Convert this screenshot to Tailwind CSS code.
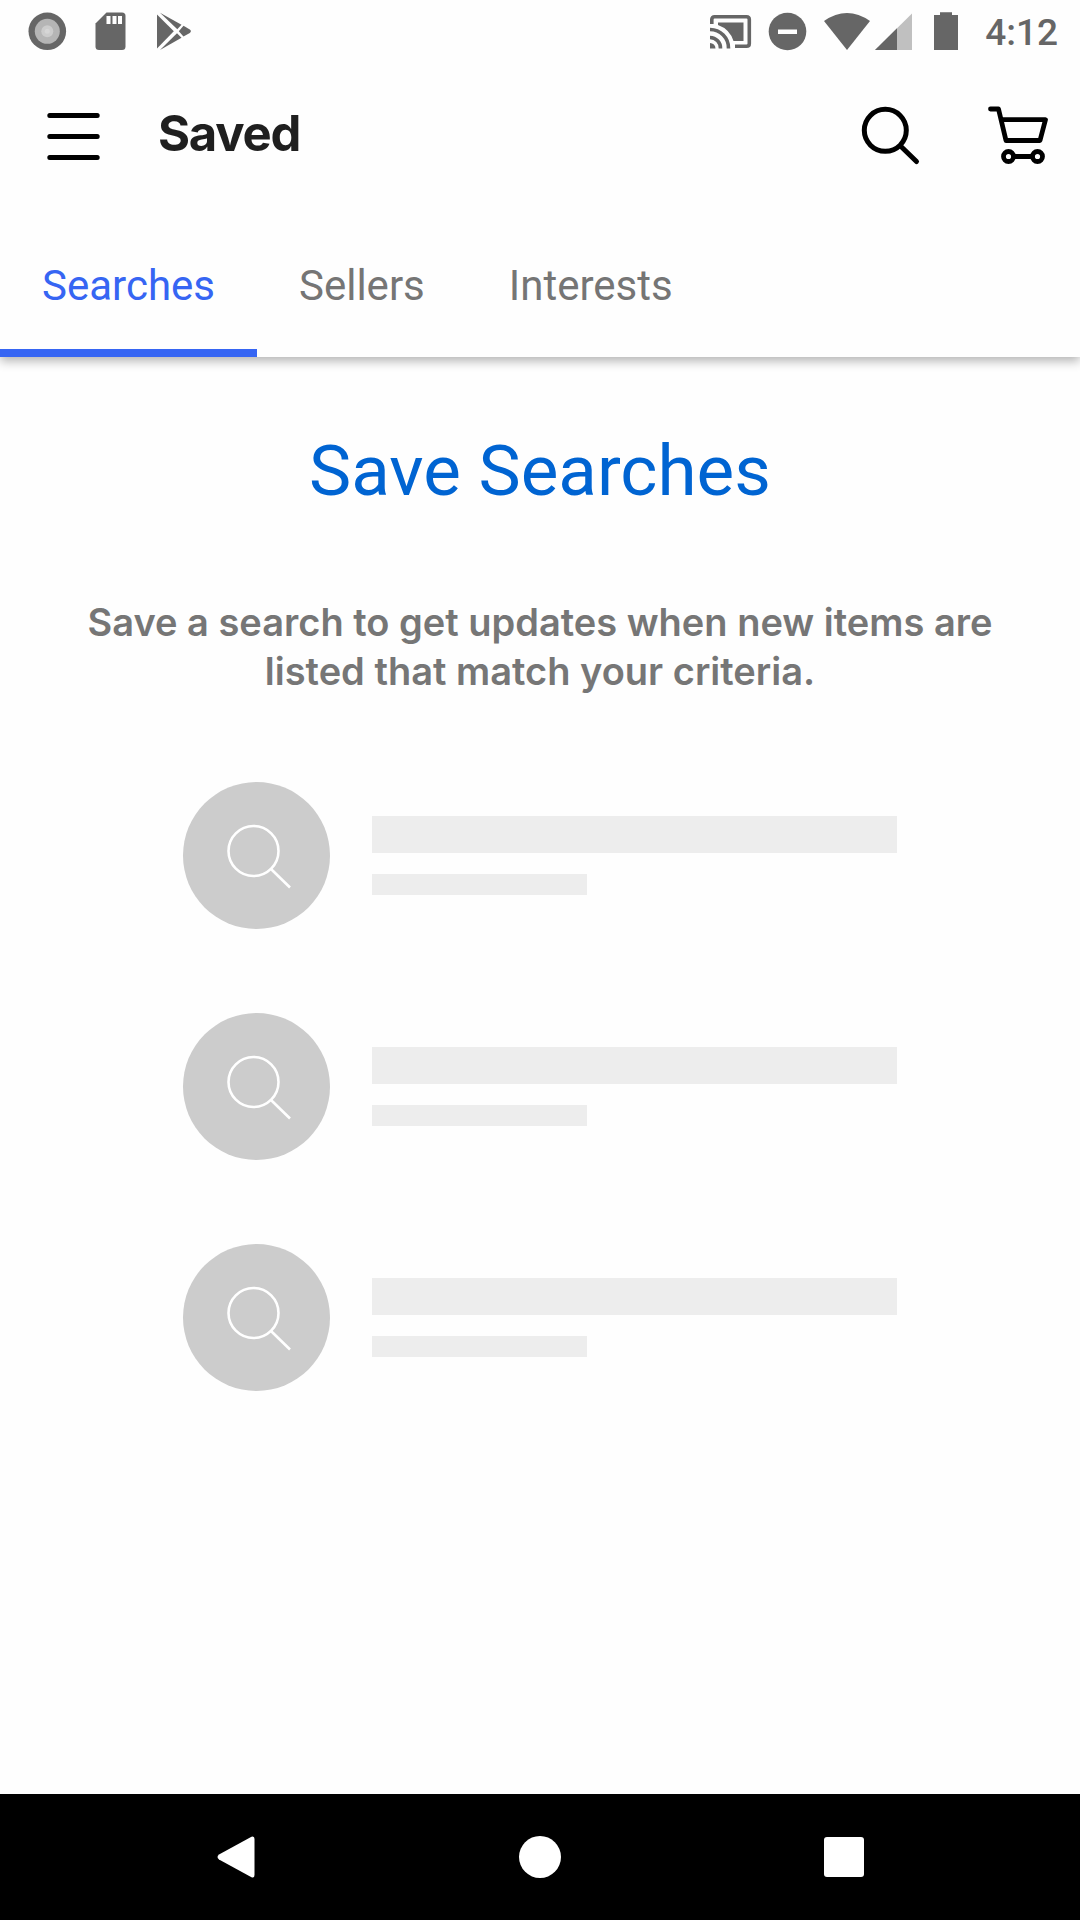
<!DOCTYPE html>
<html lang="en">
<head>
<meta charset="utf-8">
<meta name="viewport" content="width=device-width, initial-scale=1">
<title>Saved</title>
<script src="https://cdn.jsdelivr.net/npm/@tailwindcss/browser@4"></script>
</head>
<body class="flex min-h-screen flex-col bg-[#fefefe] font-['Roboto',sans-serif]">

<svg class="hidden" aria-hidden="true">
  <symbol id="lens" viewBox="0 0 147 147">
    <g fill="none" stroke="#fff" stroke-width="2.6"><circle cx="70.500" cy="69" r="25"/><path d="M88 87l19 18.500"/></g>
  </symbol>
</svg>

<!-- System status bar -->
<div class="relative z-10 flex h-[63px] items-start justify-between bg-[#fefefe] pt-[10px] pr-[22px] pl-[26px] text-[#666]">
  <div class="flex gap-[21px]">
    <svg class="size-[42px]" viewBox="0 0 42 42"><circle cx="21.300" cy="21.300" r="18.800" fill="#666"/><circle cx="21.300" cy="21.300" r="12.500" fill="#b5b5b5"/><circle cx="21.300" cy="21.300" r="6" fill="#ccc"/><circle cx="21.300" cy="21.300" r="2.500" fill="#d6d6d6"/></svg>
    <svg class="size-[42px]" viewBox="0 0 42 42"><path fill="currentColor" d="M17.500 2.500H33a3.500 3.500 0 0 1 3.500 3.500v30.500a3.500 3.500 0 0 1-3.500 3.500H10a3.500 3.500 0 0 1-3.500-3.500V13.500z"/><path fill="#fff" d="M17.500 6h4v8h-4zM23.500 6h4v8h-4zM29 6h4v8h-4z"/></svg>
    <svg class="size-[42px]" viewBox="0 0 42 42"><g fill="currentColor"><path d="M5 4.500L21.800 21.300L5 38.500z"/><path d="M8 2.800L29.500 14.700L25.300 19.200z"/><path d="M8 40L29.500 27.700L25 23.200z"/><path d="M31.500 15.800L37.800 19.500Q40 21.200 37.800 23L31.500 26.500L26.800 21.300z"/></g></svg>
  </div>
  <div class="flex gap-[15px]">
    <svg class="h-[42px] w-[44px]" viewBox="0 0 44 42"><g fill="none" stroke="currentColor" stroke-width="3.600"><path d="M2.800 14V9.500Q2.800 6.700 5.600 6.700H37.500Q40.300 6.700 40.300 9.500V33.500Q40.300 36.300 37.500 36.300H26"/><path d="M1 27.500A10.500 10.500 0 0 1 11.500 38.500M1 19.500A18.500 18.500 0 0 1 19.500 38.500"/></g><path fill="currentColor" d="M1 33a5.500 5.500 0 0 1 5.500 5.500H1zM9 12.500H34.500V31H24.500A25 25 0 0 0 9 15z"/></svg>
    <svg class="h-[42px] w-10" viewBox="0 0 40 42"><circle cx="19.500" cy="21.500" r="18.800" fill="currentColor"/><path fill="#fff" d="M10 19.500h19v4.500H10z"/></svg>
    <div class="flex gap-1">
      <svg class="h-[42px] w-12" viewBox="0 0 48 42"><path fill="currentColor" d="M1 11Q24 -5 47 11L24 40z"/></svg>
      <svg class="h-[42px] w-[38px]" viewBox="0 0 38 42"><path fill="#c0c0c0" d="M37 3.500V40H0z"/><path fill="currentColor" d="M22 18.300V40H0z"/></svg>
    </div>
    <svg class="h-[42px] w-9" viewBox="0 0 36 42"><path fill="currentColor" d="M6 5h6V2.200h12V5h6v35H6z"/></svg>
    <time class="pl-[6px] text-[37px] leading-[46px] font-medium">4:12</time>
  </div>
</div>

<!-- App bar and tabs -->
<header class="relative bg-[#fefefe] shadow-[0_4px_10px_rgba(0,0,0,0.3)]">
  <div class="flex h-[147px] items-center pr-[30px] pl-[42px]">
    <button type="button" aria-label="Menu">
      <svg class="size-[63px]" viewBox="0 0 63 63"><path fill="none" stroke="#000" stroke-width="5" stroke-linecap="round" d="M7.800 10.500H55.200M7.800 31.500H55.200M7.800 52.500H55.200"/></svg>
    </button>
    <h1 class="grow pb-[6px] pl-[53px] font-['Inter',sans-serif] text-[49px] leading-[60px] font-bold tracking-tight text-[#1f1f1f]">Saved</h1>
    <div class="flex gap-[65px]">
      <button type="button" aria-label="Search">
        <svg class="size-[63px]" viewBox="0 0 63 63"><g fill="none" stroke="#000" stroke-width="5" stroke-linecap="round"><circle cx="26.300" cy="25.300" r="21"/><path d="M42 41.500L57.500 56.500"/></g></svg>
      </button>
      <button type="button" aria-label="Cart">
        <svg class="size-[63px]" viewBox="0 0 63 63"><g fill="none" stroke="#000" stroke-width="4.800" stroke-linecap="round" stroke-linejoin="round"><path d="M3.500 4H11.500L19 35.500H53L58.500 14.700H14.500"/><circle cx="21.500" cy="51.500" r="5"/><circle cx="50.500" cy="51.500" r="5"/><path d="M27 51.500H45"/></g></svg>
      </button>
    </div>
  </div>
  <div role="tablist" class="flex h-[147px] text-[42px] leading-[50px] text-[#757575]">
    <button type="button" role="tab" aria-selected="true" class="border-b-8 border-[#3665f3] px-[42px] pt-[13px] text-[#3665f3]">Searches</button>
    <button type="button" role="tab" aria-selected="false" class="border-b-8 border-transparent px-[42px] pt-[13px]">Sellers</button>
    <button type="button" role="tab" aria-selected="false" class="border-b-8 border-transparent px-[42px] pt-[13px]">Interests</button>
  </div>
</header>

<!-- Empty state -->
<main class="flex grow flex-col items-center px-[42px] pt-[72px] text-center">
  <h2 class="text-[71px] leading-[84px] text-[#0064d2]">Save Searches</h2>
  <p class="mt-[85px] max-w-[940px] font-['Inter',sans-serif] text-[38px] leading-[49px] font-semibold text-[#767676]">Save a search to get updates when new items are listed that match your criteria.</p>
  <ul class="mt-[86px] flex w-full max-w-[714px] flex-col gap-[84px]">
    <li class="flex items-center gap-[42px]">
      <svg class="size-[147px] shrink-0 rounded-full bg-[#ccc]" aria-hidden="true"><use href="#lens"/></svg>
      <div class="flex grow flex-col gap-[21px]"><div class="h-[37px] bg-[#ededed]"></div><div class="h-[21px] w-[41%] bg-[#ededed]"></div></div>
    </li>
    <li class="flex items-center gap-[42px]">
      <svg class="size-[147px] shrink-0 rounded-full bg-[#ccc]" aria-hidden="true"><use href="#lens"/></svg>
      <div class="flex grow flex-col gap-[21px]"><div class="h-[37px] bg-[#ededed]"></div><div class="h-[21px] w-[41%] bg-[#ededed]"></div></div>
    </li>
    <li class="flex items-center gap-[42px]">
      <svg class="size-[147px] shrink-0 rounded-full bg-[#ccc]" aria-hidden="true"><use href="#lens"/></svg>
      <div class="flex grow flex-col gap-[21px]"><div class="h-[37px] bg-[#ededed]"></div><div class="h-[21px] w-[41%] bg-[#ededed]"></div></div>
    </li>
  </ul>
</main>

<!-- System navigation -->
<nav aria-label="System" class="flex h-[126px] items-center justify-center gap-[262px] bg-black">
  <button type="button" aria-label="Back"><svg class="size-[42px]" viewBox="0 0 42 42"><path fill="#fff" d="M36.500 .7Q39.500 -.3 39.500 3V39Q39.500 42.300 36.500 41.300L4 23.500Q1 21 4 18.500z"/></svg></button>
  <button type="button" aria-label="Home"><svg class="size-[42px]" viewBox="0 0 42 42"><circle cx="21" cy="21" r="21" fill="#fff"/></svg></button>
  <button type="button" aria-label="Recent apps"><svg class="size-[42px]" viewBox="0 0 42 42"><rect x="1" y="1" width="40" height="40" rx="3" fill="#fff"/></svg></button>
</nav>
</body>
</html>
